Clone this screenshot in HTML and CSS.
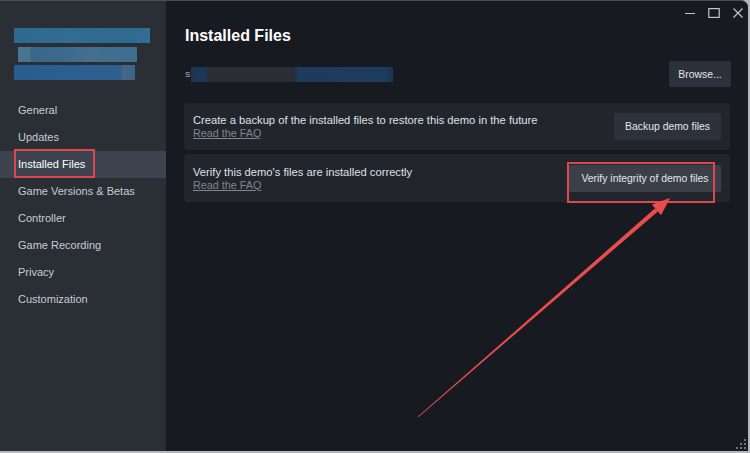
FILE: index.html
```html
<!DOCTYPE html>
<html>
<head>
<meta charset="utf-8">
<link rel="stylesheet" href="styles.css">
</head>
<body>
<div class="window">
  <aside class="sidebar">
    <div class="game-title">
      <div class="blur b1"></div>
      <div class="blur b2"></div>
      <div class="blur b3"></div>
    </div>
    <nav class="nav">
      <div class="nav-item">General</div>
      <div class="nav-item">Updates</div>
      <div class="nav-item active">Installed Files<span class="mark mark-nav"></span></div>
      <div class="nav-item">Game Versions &amp; Betas</div>
      <div class="nav-item">Controller</div>
      <div class="nav-item">Game Recording</div>
      <div class="nav-item">Privacy</div>
      <div class="nav-item">Customization</div>
    </nav>
  </aside>
  <main class="main">
    <div class="titlebar">
      <svg class="ctl" width="12" height="12" viewBox="0 0 12 12"><line x1="1" y1="6.5" x2="11" y2="6.5" stroke="#c3c6ca" stroke-width="1.2"/></svg>
      <svg class="ctl" width="12" height="12" viewBox="0 0 12 12"><rect x="0.8" y="1.6" width="10.4" height="8.8" fill="none" stroke="#c3c6ca" stroke-width="1.2"/></svg>
      <svg class="ctl" width="12" height="12" viewBox="0 0 12 12"><path d="M1.5 1.5 L10.5 10.5 M10.5 1.5 L1.5 10.5" stroke="#c3c6ca" stroke-width="1.2"/></svg>
    </div>
    <div class="content">
      <h1 class="title">Installed Files</h1>
      <div class="path-row">
        <div class="path"><span class="path-s">S</span><span class="path-blur"></span></div>
        <button class="btn btn-browse">Browse...</button>
      </div>
      <div class="card">
        <div class="card-text">
          <div class="desc">Create a backup of the installed files to restore this demo in the future</div>
          <a class="faq">Read the FAQ</a>
        </div>
        <button class="btn">Backup demo files</button>
      </div>
      <div class="card card2">
        <div class="card-text">
          <div class="desc">Verify this demo's files are installed correctly</div>
          <a class="faq">Read the FAQ</a>
        </div>
        <button class="btn btn-verify">Verify integrity of demo files<span class="mark mark-btn"></span></button>
      </div>
    </div>
  </main>
  <svg class="arrow" width="750" height="453" viewBox="0 0 750 453">
    <polygon points="417.7,416.7 655.05,208.25 657.95,211.55 418.3,417.3" fill="#ea4b4d"/>
    <polygon points="670,198 661.1,215.2 651.9,204.6" fill="#ea4b4d"/>
  </svg>
  <svg class="grip" width="14" height="14" viewBox="0 0 14 14">
    <rect x="10" y="2" width="2" height="2" fill="#6b7079"/>
    <rect x="6" y="6" width="2" height="2" fill="#6b7079"/>
    <rect x="10" y="6" width="2" height="2" fill="#6b7079"/>
    <rect x="2" y="10" width="2" height="2" fill="#6b7079"/>
    <rect x="6" y="10" width="2" height="2" fill="#6b7079"/>
    <rect x="10" y="10" width="2" height="2" fill="#6b7079"/>
  </svg>
</div>
</body>
</html>
```
FILE: styles.css
```css
* { box-sizing: border-box; }
html, body { margin: 0; padding: 0; }
body {
  background: #b4b7bb;
  width: 750px;
  height: 453px;
  overflow: hidden;
  font-family: "Liberation Sans", Arial, sans-serif;
}
.window {
  position: relative;
  width: 748px;
  height: 451px;
  display: flex;
  background: #171a21;
  border-top: 1px solid #4b4f56;
  border-top-right-radius: 7px;
  overflow: hidden;
}
.sidebar {
  width: 166px;
  flex: none;
  background: #2a2e35;
  display: flex;
  flex-direction: column;
  padding-top: 27px;
}
.game-title {
  display: flex;
  flex-direction: column;
  gap: 3px;
}
.blur {
  height: 15px;
  filter: blur(0.6px);
}
.b1 {
  margin-left: 14px;
  width: 136px;
  background: linear-gradient(90deg, #2f6890, #336c93 40%, #2f6a91 80%, #346d94);
}
.b2 {
  margin-left: 18px;
  width: 119px;
  margin-top: 1px;
  background: linear-gradient(90deg, #4a7590 0, #4a7590 10%, #3a6787 11%, #3b6a8c 40%, #446f8d 60%, #3f6d8f 100%);
}
.b3 {
  margin-left: 14px;
  width: 121px;
  background: linear-gradient(90deg, #295d8f, #2b5f90 60%, #2e5f8c 88%, #45678a 90%, #3f6384);
}
.nav {
  margin-top: 17px;
  display: flex;
  flex-direction: column;
}
.nav-item {
  position: relative;
  height: 27px;
  line-height: 27px;
  padding-left: 18px;
  font-size: 11px;
  color: #c9ccd0;
}
.nav-item.active {
  background: #3d4450;
  color: #ffffff;
}
.mark {
  position: absolute;
  border: 2px solid #e0474c;
  pointer-events: none;
}
.mark-nav {
  left: 14px;
  top: -2px;
  width: 81px;
  height: 29px;
}
.main {
  flex: 1;
  display: flex;
  flex-direction: column;
}
.titlebar {
  height: 26px;
  display: flex;
  justify-content: flex-end;
  align-items: flex-start;
  gap: 12px;
  padding-top: 6px;
  padding-right: 4px;
}
.ctl { display: block; }
.content {
  padding: 0 18px 0 18px;
  display: flex;
  flex-direction: column;
}
.title {
  margin: 0 0 0 1px;
  font-size: 16px;
  line-height: 18px;
  font-weight: bold;
  color: #ffffff;
}
.path-row {
  margin-top: 16px;
  height: 26px;
  display: flex;
  align-items: center;
  justify-content: space-between;
}
.path {
  display: flex;
  align-items: center;
  height: 15px;
}
.path-s {
  font-size: 8px;
  color: #b8bcc2;
  margin-left: 1px;
  margin-right: 1px;
  line-height: 15px;
}
.path-blur {
  width: 202px;
  height: 15px;
  filter: blur(0.6px);
  background: linear-gradient(90deg, #1c3550 0, #1e3754 7%, #2a2d33 9%, #2a2d33 51%, #1d3b5c 53%, #1d3d5f 95%, #1c3350 100%);
}
.btn {
  position: relative;
  border: none;
  height: 27px;
  padding: 0 11px;
  border-radius: 2px;
  background: #2d3139;
  color: #e4e6e9;
  font-family: "Liberation Sans", Arial, sans-serif;
  font-size: 10.4px;
  white-space: nowrap;
}
.btn-browse {
  height: 26px;
  width: 62px;
  padding: 0;
  margin-right: -1px;
}
.card {
  margin-top: 16px;
  height: 47px;
  background: #22252c;
  border-radius: 3px;
  display: flex;
  align-items: center;
  justify-content: space-between;
  padding: 0 9px 0 9px;
}
.card2 {
  margin-top: 4px;
  height: 48px;
}
.card-text {
  display: flex;
  flex-direction: column;
  padding-top: 1px;
}
.desc {
  font-size: 11.2px;
  line-height: 13px;
  color: #dfe2e6;
}
.faq {
  font-size: 10.8px;
  line-height: 13px;
  color: #80868e;
  text-decoration: underline;
}
.btn-verify {
  background: #3a3f48;
  padding: 0 10px;
  width: 152px;
}
.mark-btn {
  left: -2px;
  top: -3px;
  width: 148px;
  height: 41px;
}
.arrow {
  position: absolute;
  left: 0;
  top: -1px;
  pointer-events: none;
}
.grip {
  position: absolute;
  right: 0;
  bottom: 0;
}
```
